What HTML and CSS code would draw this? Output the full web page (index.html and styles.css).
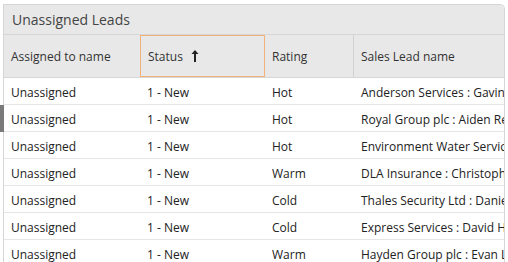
FILE: index.html
```html
<!DOCTYPE html>
<html>
<head>
<meta charset="utf-8">
<link rel="stylesheet" href="styles.css">
</head>
<body>
<div class="tab"></div>
<div class="panel">
  <div class="title">Unassigned Leads</div>
  <div class="grid head">
    <div class="cell">Assigned to name</div>
    <div class="cell sorted">Status <svg width="8" height="14" viewBox="0 0 8 14"><path d="M4 1 L7.5 5 L5 5 L5 13 L3 13 L3 5 L0.5 5 Z" fill="#222"/></svg></div>
    <div class="cell">Rating</div>
    <div class="cell sep">Sales Lead name</div>
  </div>
  <div class="grid row"><div class="cell">Unassigned</div><div class="cell">1 - New</div><div class="cell">Hot</div><div class="cell">Anderson Services : Gavin Smith</div></div>
  <div class="grid row"><div class="cell">Unassigned</div><div class="cell">1 - New</div><div class="cell">Hot</div><div class="cell">Royal Group plc : Aiden Reid</div></div>
  <div class="grid row"><div class="cell">Unassigned</div><div class="cell">1 - New</div><div class="cell">Hot</div><div class="cell">Environment Water Services</div></div>
  <div class="grid row"><div class="cell">Unassigned</div><div class="cell">1 - New</div><div class="cell">Warm</div><div class="cell">DLA Insurance : Christopher</div></div>
  <div class="grid row"><div class="cell">Unassigned</div><div class="cell">1 - New</div><div class="cell">Cold</div><div class="cell">Thales Security Ltd : Daniel</div></div>
  <div class="grid row"><div class="cell">Unassigned</div><div class="cell">1 - New</div><div class="cell">Cold</div><div class="cell">Express Services : David Hill</div></div>
  <div class="grid row"><div class="cell">Unassigned</div><div class="cell">1 - New</div><div class="cell">Warm</div><div class="cell">Hayden Group plc : Evan Lee</div></div>
</div>
</body>
</html>
```
FILE: styles.css
```css
html, body { margin: 0; padding: 0; background: #fff; overflow: hidden; }
body {
  font-family: "Open Sans", "Liberation Sans", sans-serif;
  font-size: 12px;
  color: #222;
  padding: 4px 0 0 3px;
  width: 508px;
  height: 262px;
  box-sizing: border-box;
  position: relative;
}
.tab {
  position: absolute;
  left: 0; top: 105px;
  width: 4px; height: 27px;
  background: #7a7a7a;
}
.panel {
  width: 500px;
  border: 1px solid #d6d6d6;
  border-bottom: none;
  border-top-right-radius: 5px;
  overflow: hidden;
}
.title {
  height: 29px;
  background: #e8e8e8;
  border-bottom: 1px solid #d6d6d6;
  font-size: 14px;
  color: #444;
  padding-left: 8px;
  line-height: 29px;
}
.grid {
  display: grid;
  grid-template-columns: 136px 125px 88px 1fr;
}
.head {
  height: 42px;
  background: #e8e8e8;
  border-bottom: 1px solid #d6d6d6;
}
.head .cell {
  line-height: 43px;
  color: #333;
}
.head .sorted {
  border: 1px solid #f0b27a;
  line-height: 41px;
  display: flex;
  align-items: center;
  gap: 8px;
}
.head .sep { border-left: 1px solid #d2d2d2; }
.cell {
  padding-left: 7px;
  white-space: nowrap;
  overflow: hidden;
}
.row {
  height: 27px;
  box-sizing: border-box;
  padding-top: 3px;
  line-height: 23px;
  border-bottom: 1px solid #e6e6e6;
}
.row .cell:nth-child(4) { padding-left: 8px; }
```
